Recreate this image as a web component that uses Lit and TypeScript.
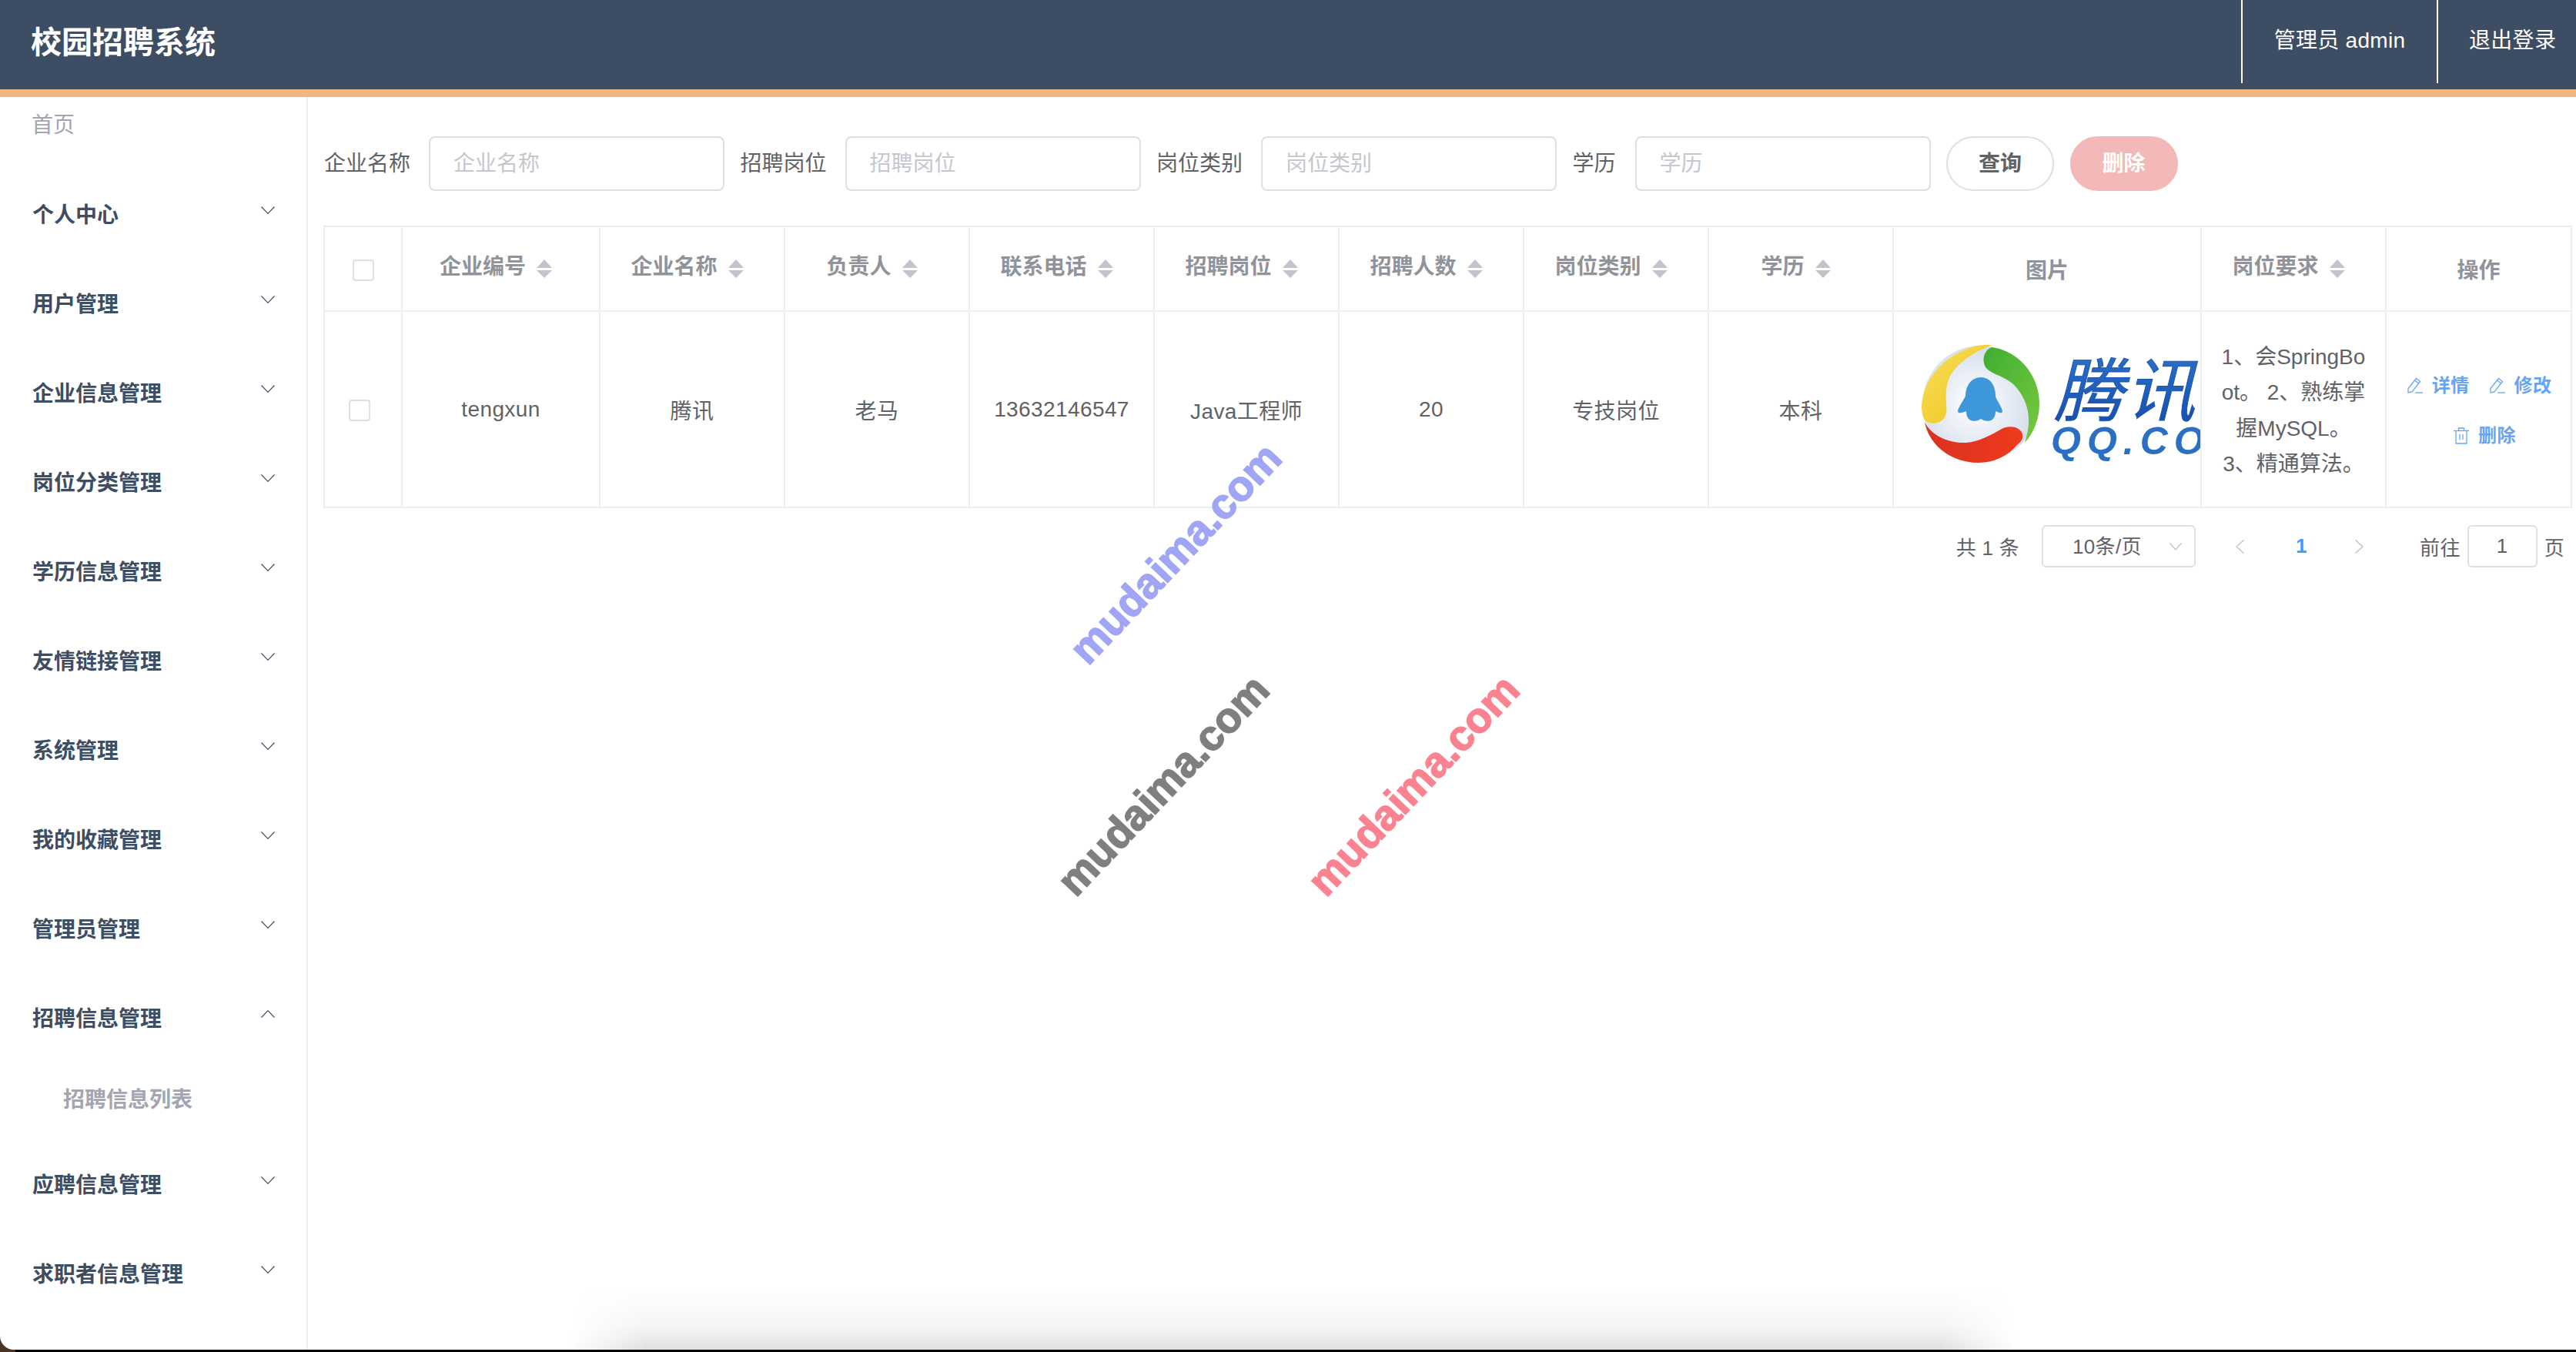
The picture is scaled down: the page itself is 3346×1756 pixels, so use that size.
import { LitElement, html, css, svg } from 'lit';
import { customElement } from 'lit/decorators.js';

const MENU_BEFORE = ['个人中心', '用户管理', '企业信息管理', '岗位分类管理', '学历信息管理', '友情链接管理', '系统管理', '我的收藏管理', '管理员管理'];
const MENU_AFTER = ['应聘信息管理', '求职者信息管理'];
const COLS = [
  { title: '企业编号', w: 257, sort: true },
  { title: '企业名称', w: 240, sort: true },
  { title: '负责人', w: 240, sort: true },
  { title: '联系电话', w: 240, sort: true },
  { title: '招聘岗位', w: 240, sort: true },
  { title: '招聘人数', w: 240, sort: true },
  { title: '岗位类别', w: 240, sort: true },
  { title: '学历', w: 240, sort: true },
  { title: '图片', w: 400, sort: false },
  { title: '岗位要求', w: 240, sort: true },
  { title: '操作', w: 241, sort: false },
];
const ROW = ['tengxun', '腾讯', '老马', '13632146547', 'Java工程师', '20', '专技岗位', '本科'];

const chevron = (up = false) => html`<svg class="chev" viewBox="0 0 18 10" width="18" height="10">
  <polyline points=${up ? '0.5,9.5 9,0.7 17.5,9.5' : '0.5,0.5 9,9.3 17.5,0.5'} fill="none" stroke="#3d4d63" stroke-width="1.2"></polyline>
</svg>`;

const caret = html`<svg class="caret" viewBox="0 0 20 24" width="20" height="24">
  <path d="M10 0 20 11H0Z" fill="#c0c4cc"></path><path d="M0 14H20L10 24Z" fill="#c0c4cc"></path>
</svg>`;

const pencil = html`<svg class="op-icon" viewBox="0 0 20 21" width="20" height="21" fill="none" stroke="#66a5f5" stroke-width="1.3">
  <path d="M1 14.5 11.5 1.5 16.5 5.5 6 18.8 1 20Z"></path><path d="M9.6 4 14.6 8"></path><path d="M10 20H20"></path>
</svg>`;

const trash = html`<svg class="op-icon" viewBox="0 0 20 22" width="20" height="22" fill="none" stroke="#66a5f5" stroke-width="1.3">
  <path d="M0 4.5H20"></path><path d="M6.5 4.5V1H13.5V4.5"></path><path d="M3 4.5V21H17V4.5"></path><path d="M8 9V16M12 9V16"></path>
</svg>`;

// viewBox uses the crop's own coordinates, the cell clips whatever runs past its right edge
const logo = svg`<svg class="logo" viewBox="-10 7 399 190" width="399" height="190">
  <defs>
    <radialGradient id="ball" cx="45%" cy="50%" r="60%"><stop offset="0" stop-color="#ffffff"></stop><stop offset="1" stop-color="#cfd9ea"></stop></radialGradient>
    <linearGradient id="yel" x1="0" y1="0" x2="1" y2="1"><stop offset="0" stop-color="#f8df5a"></stop><stop offset="1" stop-color="#eec31c"></stop></linearGradient>
    <linearGradient id="grn" x1="0" y1="0" x2="1" y2="1"><stop offset="0" stop-color="#3fae32"></stop><stop offset="1" stop-color="#78c93e"></stop></linearGradient>
    <linearGradient id="red" x1="0" y1="0" x2="1" y2="0"><stop offset="0" stop-color="#d9321f"></stop><stop offset="1" stop-color="#ef3a1e"></stop></linearGradient>
    <linearGradient id="blu" x1="0" y1="0" x2="0" y2="1"><stop offset="0" stop-color="#2f78d0"></stop><stop offset="1" stop-color="#134aa8"></stop></linearGradient>
  </defs>
  <circle cx="102.5" cy="94" r="75" fill="url(#ball)"></circle>
  <path d="M118 18C80 14 26 50 26 100 26 106 28 112 30 116 36 121 50 122 56 112 62 100 54 90 60 66 66 46 90 28 118 18Z" fill="url(#yel)"></path>
  <path d="M117 21C150 25 179 55 179 95 179 115 171 133 160 145 170 115 165 92 148 72 138 60 122 58 112 50 104 44 104 26 117 21Z" fill="url(#grn)"></path>
  <path d="M30 118C38 135 60 146 84 145 100 144 118 134 130 127 140 122 154 124 157 134 158 140 156 143 150 148 138 162 120 171 100 171 66 171 36 150 30 118Z" fill="url(#red)"></path>
  <path d="M103 60C116 60 122 72 122 84 122 88 130 98 131 104 131 108 126 106 122 104 122 110 120 114 116 116 110 118 106 116 103 114 100 116 96 118 90 116 86 114 84 110 84 104 80 106 73 108 73 104 74 98 82 88 83 84 83 72 90 60 103 60Z" fill="#3e97d8"></path>
  <text class="logo-cn" x="198" y="110">腾讯</text>
  <text class="logo-en" x="194" y="160">QQ.COM</text>
</svg>`;

@customElement('app-root')
export class AppRoot extends LitElement {
  static styles = css`
    :host {
      display: block;
      position: relative;
      height: 1756px;
      overflow: hidden;
      background: linear-gradient(to right, #4a3620 0 20px, #000 20px);
      font-family: "Liberation Sans", "Noto Sans CJK SC", sans-serif;
      color: #606266;
    }
    .frame {
      height: 1753px;
      background: #fff;
      border-bottom-left-radius: 18px;
      display: flex;
      flex-direction: column;
      overflow: hidden;
    }
    .top {
      flex: none;
      height: 116px;
      background: #3d4d63;
      border-bottom: 10px solid #efb67f;
      display: flex;
      align-items: flex-start;
      justify-content: space-between;
      color: #fff;
    }
    .brand {
      margin: 0;
      padding-left: 40px;
      font-size: 40px;
      font-weight: 700;
      line-height: 110px;
    }
    .nav { display: flex; }
    .nav-item {
      box-sizing: border-box;
      width: 254px;
      height: 108px;
      line-height: 105px;
      font-size: 28px;
      letter-spacing: 0.3px;
      text-align: center;
      border-left: 2px solid #fff;
    }
    .nav-item:last-child { width: 181px; padding-left: 40px; text-align: left; }
    .body { flex: 1; display: flex; min-height: 0; }

    .side {
      flex: none;
      width: 398px;
      border-right: 2px solid #eeeef1;
      font-size: 28px;
    }
    .home {
      height: 72px;
      line-height: 74px;
      padding-left: 41px;
      margin-bottom: 21px;
      color: #a3a5b1;
    }
    .menu {
      height: 116px;
      padding: 0 41px 0 42px;
      display: flex;
      justify-content: space-between;
      align-items: center;
      color: #3d4d63;
      font-weight: 700;
    }
    .chev { margin-top: -8px; }
    .sub {
      height: 90px;
      line-height: 99px;
      margin-bottom: 10px;
      padding-left: 82px;
      color: #a3a5b1;
      font-weight: 700;
    }

    .main { flex: 1; min-width: 0; padding: 51px 6px 0 21px; }
    .search { display: flex; align-items: center; gap: 20.5px; height: 71px; }
    .group { display: flex; align-items: center; flex: none; }
    .label { width: 136px; flex: none; font-size: 28px; color: #606266; line-height: 70px; }
    .label.short { width: 81px; }
    .field {
      flex: none;
      box-sizing: border-box;
      width: 384px;
      height: 71px;
      border: 2px solid #dcdfe6;
      border-radius: 8px;
      padding-left: 30px;
      line-height: 67px;
      font-size: 28px;
      color: #c4c7ce;
    }
    .btn {
      flex: none;
      box-sizing: border-box;
      width: 140px;
      height: 71px;
      border-radius: 36px;
      line-height: 67px;
      text-align: center;
      font-size: 28px;
      font-weight: 700;
      border: 2px solid #dcdfe6;
      color: #606266;
    }
    .btn.danger { background: #f3b8b8; border-color: #f3b8b8; color: #fff; }

    table {
      margin: 45px 0 0 -1px;
      border-collapse: collapse;
      table-layout: fixed;
      width: 2921px;
    }
    th, td {
      border: 2px solid #ebeef5;
      padding: 0;
      text-align: center;
      font-size: 28px;
    }
    th { height: 108px; color: #909399; font-weight: 700; }
    td { height: 253px; color: #606266; letter-spacing: 0.4px; }
    .th-sort {
      display: inline-flex;
      align-items: center;
      gap: 14px;
      margin-right: 13px;
      line-height: 40px;
      position: relative;
      top: -2px;
    }
    .caret { position: relative; top: 2px; }
    .box {
      display: inline-block;
      box-sizing: border-box;
      width: 28px;
      height: 28px;
      border: 2px solid #dcdfe6;
      border-radius: 4px;
      vertical-align: middle;
    }
    .box.offset { margin-right: 9px; }
    .pic { height: 251px; overflow: hidden; display: flex; align-items: center; }
    .logo { flex: none; }
    .logo-cn {
      font-family: "Noto Sans CJK SC", sans-serif;
      font-style: italic;
      font-size: 90px;
      letter-spacing: 3px;
      fill: url(#blu);
      stroke: #1d55b3;
      stroke-width: 1;
    }
    .logo-en {
      font-family: "Liberation Sans", sans-serif;
      font-style: italic;
      font-weight: 700;
      font-size: 50px;
      letter-spacing: 8px;
      fill: #2a6fc4;
    }
    .req { line-height: 46.2px; padding-top: 4px; height: 249px; letter-spacing: 0; }
    .ops { display: flex; flex-direction: column; gap: 27px; align-items: center; padding: 3px 0 0 2px; }
    .ops-row { display: flex; gap: 26px; }
    .ops-row + .ops-row { margin-left: 14px; }
    .op {
      display: flex;
      align-items: center;
      gap: 12px;
      font-size: 24px;
      line-height: 38px;
      font-weight: 700;
      color: #66a5f5;
    }

    .pager {
      display: flex;
      justify-content: flex-end;
      align-items: center;
      height: 55px;
      margin-top: 22px;
      padding-right: 9px;
      font-size: 26px;
      letter-spacing: 0.3px;
      color: #606266;
    }
    .pg-box {
      flex: none;
      box-sizing: border-box;
      height: 55px;
      border: 2px solid #dcdfe6;
      border-radius: 6px;
      line-height: 50px;
    }
    .pg-size {
      width: 200px;
      margin-left: 29px;
      padding: 0 16px 0 38px;
      display: flex;
      justify-content: space-between;
      align-items: center;
    }
    .pg-jump { width: 91px; margin: 0 9px; text-align: center; }
    .pg-arrow { flex: none; }
    .pg-prev { margin-left: 52px; }
    .pg-num { width: 10px; margin: 0 67px; text-align: center; color: #409eff; font-weight: 700; }
    .pg-next { margin-right: 73px; }

    .mark {
      position: absolute;
      white-space: nowrap;
      font-family: "Liberation Sans", sans-serif;
      font-size: 55px;
      font-weight: 700;
      line-height: 1;
      -webkit-text-stroke: 1.6px currentColor;
      transform: translate(-50%, -50%) rotate(-46.5deg);
      pointer-events: none;
    }
    .mark.blue { left: 1527px; top: 719px; color: #a0a5f5; }
    .mark.grey { left: 1511px; top: 1020px; color: #7f7f7f; }
    .mark.pink { left: 1836px; top: 1020px; color: #fb8290; }

    .glow {
      position: absolute;
      left: 740px;
      top: 1670px;
      width: 1880px;
      height: 83px;
      background: linear-gradient(to bottom, transparent, rgba(0,0,0,.015) 30%, rgba(0,0,0,.04) 60%, rgba(0,0,0,.07) 80%, rgba(0,0,0,.125));
      -webkit-mask-image: linear-gradient(to right, transparent, #000 100px, #000 calc(100% - 100px), transparent);
      mask-image: linear-gradient(to right, transparent, #000 100px, #000 calc(100% - 100px), transparent);
    }
  `;

  private field(label: string, short = false) {
    return html`<div class="group"><span class="label ${short ? 'short' : ''}">${label}</span><div class="field">${label}</div></div>`;
  }

  render() {
    return html`
      <div class="frame">
        <header class="top">
          <h1 class="brand">校园招聘系统</h1>
          <nav class="nav">
            <div class="nav-item">管理员 admin</div>
            <div class="nav-item">退出登录</div>
          </nav>
        </header>
        <div class="body">
          <aside class="side">
            <div class="home">首页</div>
            ${MENU_BEFORE.map((m) => html`<div class="menu"><span>${m}</span>${chevron()}</div>`)}
            <div class="menu"><span>招聘信息管理</span>${chevron(true)}</div>
            <div class="sub">招聘信息列表</div>
            ${MENU_AFTER.map((m) => html`<div class="menu"><span>${m}</span>${chevron()}</div>`)}
          </aside>
          <main class="main">
            <div class="search">
              ${this.field('企业名称')}
              ${this.field('招聘岗位')}
              ${this.field('岗位类别')}
              ${this.field('学历', true)}
              <div class="btn">查询</div>
              <div class="btn danger">删除</div>
            </div>
            <table>
              <colgroup>
                <col style="width:101px" />
                ${COLS.map((c) => html`<col style="width:${c.w}px" />`)}
              </colgroup>
              <tr>
                <th><span class="box"></span></th>
                ${COLS.map((c) =>
                  c.sort ? html`<th><span class="th-sort">${c.title}${caret}</span></th>` : html`<th>${c.title}</th>`
                )}
              </tr>
              <tr>
                <td><span class="box offset"></span></td>
                ${ROW.map((v) => html`<td>${v}</td>`)}
                <td><div class="pic">${logo}</div></td>
                <td class="req">1、会SpringBo<br />ot。 2、熟练掌<br />握MySQL。<br />3、精通算法。</td>
                <td>
                  <div class="ops">
                    <div class="ops-row">
                      <div class="op">${pencil}详情</div>
                      <div class="op">${pencil}修改</div>
                    </div>
                    <div class="ops-row">
                      <div class="op">${trash}删除</div>
                    </div>
                  </div>
                </td>
              </tr>
            </table>
            <div class="pager">
              <span>共 1 条</span>
              <div class="pg-box pg-size">
                <span>10条/页</span>
                <svg viewBox="0 0 16 10" width="16" height="10"><polyline points="0.5,0.5 8,9 15.5,0.5" fill="none" stroke="#c0c4cc" stroke-width="1.3"></polyline></svg>
              </div>
              <svg class="pg-arrow pg-prev" viewBox="0 0 11 18" width="11" height="18"><polyline points="10.5,0.5 1,9 10.5,17.5" fill="none" stroke="#c0c4cc" stroke-width="1.5"></polyline></svg>
              <span class="pg-num">1</span>
              <svg class="pg-arrow pg-next" viewBox="0 0 11 18" width="11" height="18"><polyline points="0.5,0.5 10,9 0.5,17.5" fill="none" stroke="#c0c4cc" stroke-width="1.5"></polyline></svg>
              <span>前往</span>
              <div class="pg-box pg-jump">1</div>
              <span>页</span>
            </div>
          </main>
        </div>
      </div>
      <div class="mark blue">mudaima.com</div>
      <div class="mark grey">mudaima.com</div>
      <div class="mark pink">mudaima.com</div>
      <div class="glow"></div>
    `;
  }
}
